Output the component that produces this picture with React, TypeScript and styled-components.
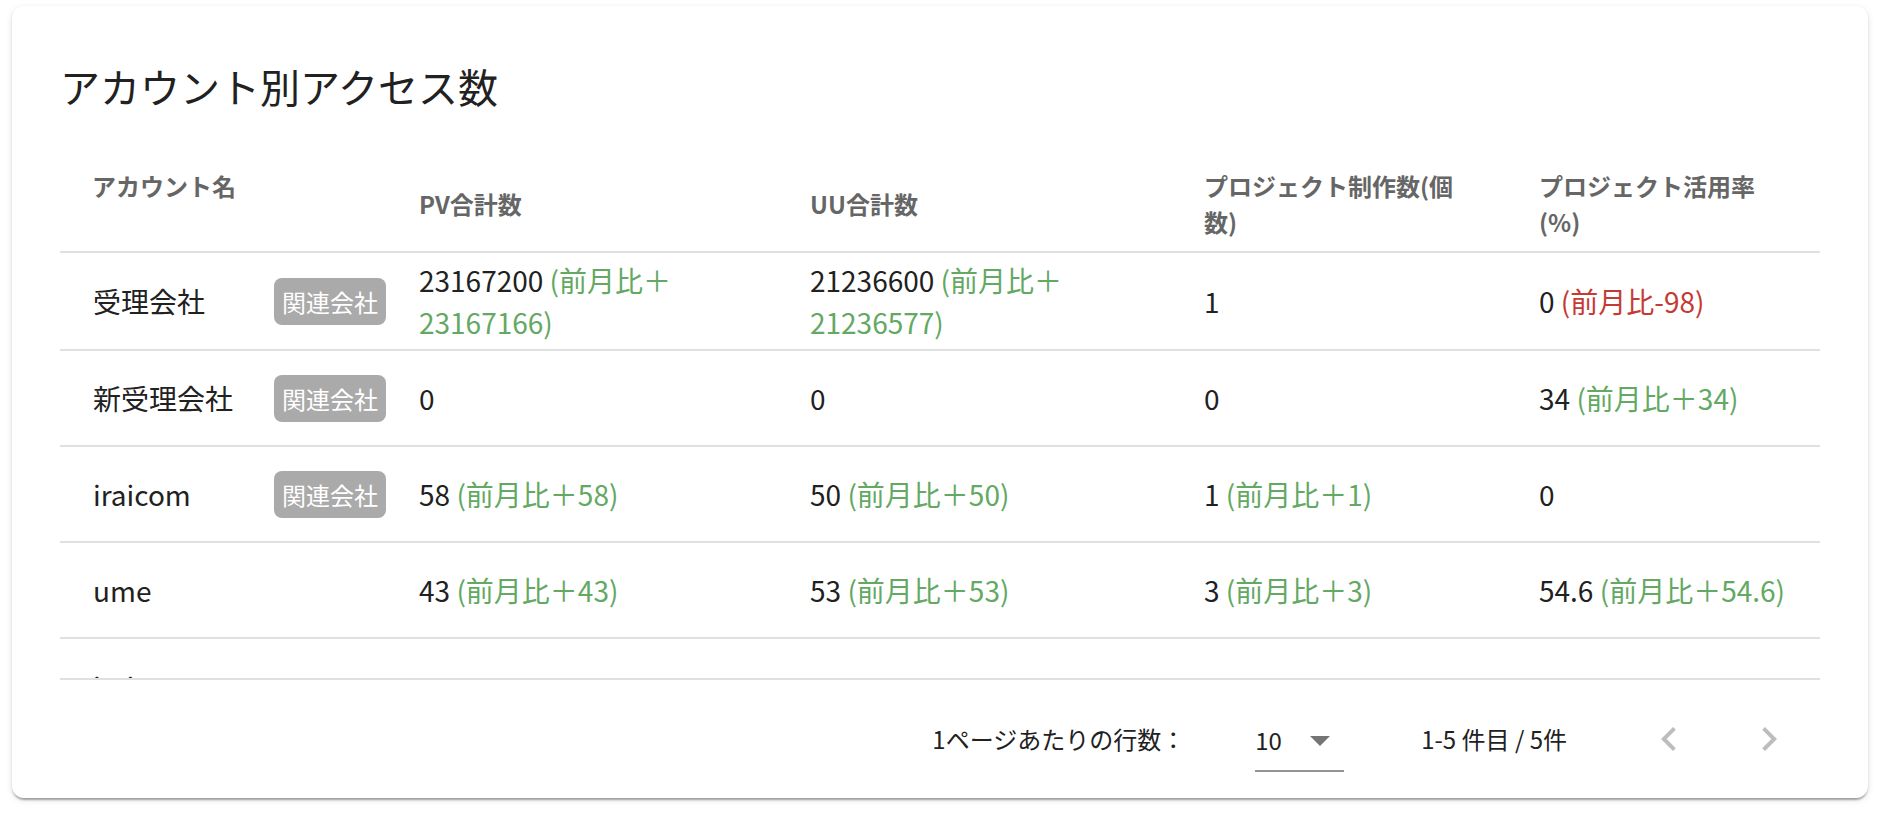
import React from 'react';
import styled, { createGlobalStyle } from 'styled-components';

const GlobalStyle = createGlobalStyle`
  html, body {
    margin: 0;
    padding: 0;
    background: #ffffff;
  }
  body {
    font-family: "Noto Sans CJK JP", "Noto Sans", sans-serif;
    color: #212121;
  }
`;

const Page = styled.div`
  width: 1888px;
  height: 816px;
  box-sizing: border-box;
  padding: 6px 20px 18px 12px;
`;

const Card = styled.section`
  height: 792px;
  box-sizing: border-box;
  padding: 56px 48px 0 48px;
  border-radius: 12px;
  background: #fff;
  box-shadow: 0px 4px 2px -2px rgba(0, 0, 0, 0.2), 0px 2px 2px 0px rgba(0, 0, 0, 0.14),
    0px 2px 6px 0px rgba(0, 0, 0, 0.12);
  display: flex;
  flex-direction: column;
`;

const Title = styled.h2`
  margin: 0;
  font-size: 40px;
  line-height: 48px;
  font-weight: 400;
  color: #212121;
`;

const TableWrap = styled.div`
  margin-top: 47px;
  height: 521px;
  overflow: hidden;
  border-bottom: 2px solid #e0e0e0;
`;

const cols = '327px 391px 394px 335px 313px';

const Row = styled.div`
  display: grid;
  grid-template-columns: ${cols};
  align-items: center;
  box-sizing: border-box;
  min-height: 96px;
  border-bottom: 2px solid #e0e0e0;
`;

const HeadCell = styled.div<{ $top?: boolean }>`
  padding: 11px 32px;
  font-size: 24px;
  line-height: 36px;
  font-weight: 700;
  color: #666666;
  align-self: ${(p) => (p.$top ? 'start' : 'center')};
`;

const Cell = styled.div`
  padding: 6px 32px;
  font-size: 28px;
  line-height: 42px;
  color: #212121;
`;

const NameCell = styled.div`
  display: flex;
  align-items: center;
  justify-content: space-between;
  padding: 6px 1px 6px 33px;
  font-size: 28px;
  line-height: 42px;
  color: #212121;
`;

const Badge = styled.span`
  display: inline-block;
  height: 47px;
  line-height: 47px;
  padding: 0 8px;
  border-radius: 8px;
  background: #aaaaaa;
  color: #ffffff;
  font-size: 24px;
  white-space: nowrap;
`;

const Delta = styled.span<{ $neg?: boolean }>`
  color: ${(p) => (p.$neg ? '#c53b34' : '#63a863')};
`;

const Pager = styled.div`
  flex: 1;
  display: flex;
  align-items: center;
  justify-content: flex-end;
  padding-right: 27px;
  font-size: 24px;
  line-height: 36px;
  color: #212121;
`;

const PagerLabel = styled.span`
  margin-right: 70px;
`;

const Select = styled.div`
  display: flex;
  align-items: center;
  width: 89px;
  margin-top: 10px;
  padding-bottom: 6px;
  border-bottom: 2px solid #949494;
  margin-right: 77px;

  svg {
    margin-left: auto;
  }
`;

const Actions = styled.div`
  display: flex;
  gap: 52px;
  margin-left: 78px;
`;

const IconButton = styled.button`
  width: 48px;
  height: 48px;
  padding: 0;
  border: 0;
  background: none;
  display: flex;
  align-items: center;
  justify-content: center;
  color: #bdbdbd;
`;

type Stat = { v: string; d?: string; neg?: boolean };
type Account = { name: string; badge?: boolean; stats: Stat[] };

const rows: Account[] = [
  {
    name: '受理会社',
    badge: true,
    stats: [
      { v: '23167200', d: '(前月比＋23167166)' },
      { v: '21236600', d: '(前月比＋21236577)' },
      { v: '1' },
      { v: '0', d: '(前月比-98)', neg: true },
    ],
  },
  {
    name: '新受理会社',
    badge: true,
    stats: [{ v: '0' }, { v: '0' }, { v: '0' }, { v: '34', d: '(前月比＋34)' }],
  },
  {
    name: 'iraicom',
    badge: true,
    stats: [
      { v: '58', d: '(前月比＋58)' },
      { v: '50', d: '(前月比＋50)' },
      { v: '1', d: '(前月比＋1)' },
      { v: '0' },
    ],
  },
  {
    name: 'ume',
    stats: [
      { v: '43', d: '(前月比＋43)' },
      { v: '53', d: '(前月比＋53)' },
      { v: '3', d: '(前月比＋3)' },
      { v: '54.6', d: '(前月比＋54.6)' },
    ],
  },
  {
    name: 'iraicom',
    stats: [{ v: '0' }, { v: '0' }, { v: '0' }, { v: '0' }],
  },
];

const ChevronLeft = () => (
  <svg width="48" height="48" viewBox="0 0 24 24" fill="currentColor">
    <path d="M15.41 7.41 14 6l-6 6 6 6 1.41-1.41L10.83 12z" />
  </svg>
);

const ChevronRight = () => (
  <svg width="48" height="48" viewBox="0 0 24 24" fill="currentColor">
    <path d="M10 6 8.59 7.41 13.17 12l-4.58 4.59L10 18l6-6z" />
  </svg>
);

const ArrowDrop = () => (
  <svg width="48" height="48" viewBox="0 0 24 24" fill="#757575">
    <path d="M7 10l5 5 5-5z" />
  </svg>
);

export default function App() {
  return (
    <>
      <GlobalStyle />
      <Page>
        <Card>
          <Title>アカウント別アクセス数</Title>
          <TableWrap>
            <Row>
              <HeadCell $top>アカウント名</HeadCell>
              <HeadCell>PV合計数</HeadCell>
              <HeadCell>UU合計数</HeadCell>
              <HeadCell>プロジェクト制作数(個数)</HeadCell>
              <HeadCell>プロジェクト活用率(%)</HeadCell>
            </Row>
            {rows.map((r, i) => (
              <Row key={i}>
                <NameCell>
                  <span>{r.name}</span>
                  {r.badge && <Badge>関連会社</Badge>}
                </NameCell>
                {r.stats.map((s, j) => (
                  <Cell key={j}>
                    {s.v}
                    {s.d && (
                      <>
                        {' '}
                        <Delta $neg={s.neg}>{s.d}</Delta>
                      </>
                    )}
                  </Cell>
                ))}
              </Row>
            ))}
          </TableWrap>
          <Pager>
            <PagerLabel>1ページあたりの行数：</PagerLabel>
            <Select>
              <span>10</span>
              <ArrowDrop />
            </Select>
            <span>1-5 件目 / 5件</span>
            <Actions>
              <IconButton disabled>
                <ChevronLeft />
              </IconButton>
              <IconButton disabled>
                <ChevronRight />
              </IconButton>
            </Actions>
          </Pager>
        </Card>
      </Page>
    </>
  );
}
